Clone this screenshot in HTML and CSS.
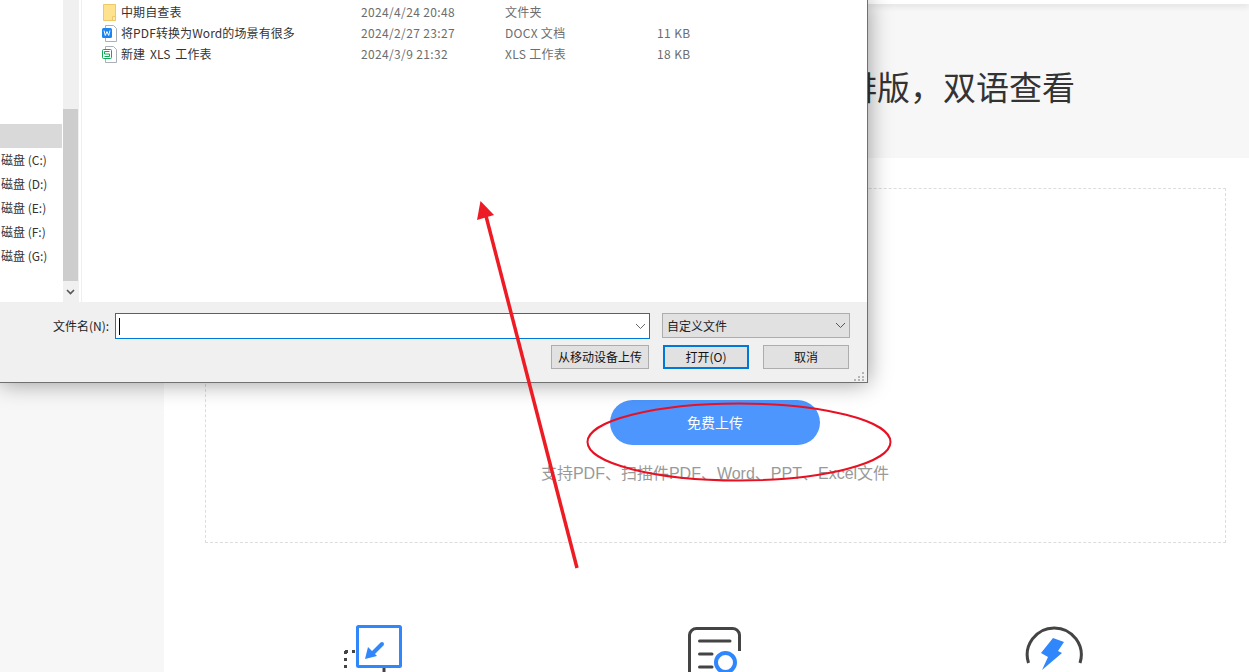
FILE: index.html
```html
<!DOCTYPE html>
<html lang="zh-CN">
<head>
<meta charset="utf-8">
<title>PDF翻译</title>
<link rel="stylesheet" href="styles.css">
</head>
<body>
<div class="page">
  <aside class="sidebar"></aside>
  <main class="main">
    <div class="topbar"></div>
    <header class="hero"><h1 class="hero-title">文档翻译，保留原文排版，双语查看</h1></header>
    <section class="upload">
      <button class="upload-btn">免费上传</button>
      <p class="upload-hint">支持PDF、扫描件PDF、Word、PPT、Excel文件</p>
    </section>
    <section class="features">
      <div class="feature">
        <svg class="feature-icon" width="60" height="60" viewBox="0 0 60 60" fill="none">
          <path d="M1.500 27V54" stroke="#444" stroke-width="3" stroke-dasharray="3 4"/>
          <path d="M1 27.500H12" stroke="#444" stroke-width="3" stroke-dasharray="3 4"/>
          <rect x="13.500" y="2.500" width="43" height="40" rx="1" stroke="#2f87fb" stroke-width="3"/>
          <path d="M38 20L27 31" stroke="#2f87fb" stroke-width="4" stroke-linecap="round"/>
          <path d="M21 35L24 23L33 32Z" fill="#2f87fb"/>
          <path d="M40 44V60" stroke="#444" stroke-width="3"/>
        </svg>
      </div>
      <div class="feature">
        <svg class="feature-icon" width="60" height="60" viewBox="-1 0 60 60" fill="none">
          <path d="M4.500 60V11A7 7 0 0 1 11.500 4.500H47A7 7 0 0 1 54.500 11V27" stroke="#444" stroke-width="3"/>
          <path d="M14.500 17H45M14.500 30H27M14.500 43H27" stroke="#444" stroke-width="3" stroke-linecap="round"/>
          <circle cx="40.500" cy="38.500" r="9.500" stroke="#2f87fb" stroke-width="4"/>
        </svg>
      </div>
      <div class="feature">
        <svg class="feature-icon" width="60" height="60" viewBox="0 0 60 60" fill="none">
          <path d="M4.500 39A27 27 0 1 1 56 39" stroke="#444" stroke-width="3"/>
          <path d="M29 14L40 18L34 27L38 29L18 46L24 33L17 29Z" fill="#2f87fb"/>
        </svg>
      </div>
    </section>
  </main>
</div>

<div class="dialog">
  <div class="dialog-body">
    <nav class="nav">
      <div class="nav-list">
        <div class="nav-item nav-selected"></div>
        <div class="nav-item">磁盘 (C:)</div>
        <div class="nav-item">磁盘 (D:)</div>
        <div class="nav-item">磁盘 (E:)</div>
        <div class="nav-item">磁盘 (F:)</div>
        <div class="nav-item">磁盘 (G:)</div>
      </div>
      <div class="scrollbar">
        <div class="scroll-thumb"></div>
        <div class="scroll-down">
          <svg width="9" height="6" viewBox="0 0 9 6" fill="none"><path d="M1 1L4.500 4.500L8 1" stroke="#555" stroke-width="1.600"/></svg>
        </div>
      </div>
    </nav>
    <div class="files">
      <div class="file-row">
        <svg class="file-icon" width="18" height="18" viewBox="0 0 18 18"><path d="M2.500 1.500H14.500V17.500H2.500Z" fill="#ffe28e" stroke="#eec868"/><path d="M11.500 13.500H14.500V17.500H11.500Z" fill="#ffe9a8" stroke="#eec868"/></svg>
        <span class="file-name">中期自查表</span><span class="file-date">2024/4/24 20:48</span><span class="file-type">文件夹</span><span class="file-size"></span>
      </div>
      <div class="file-row">
        <svg class="file-icon" width="18" height="18" viewBox="0 0 18 18"><path d="M4.500 1.500H12.500L15.500 4.500V17.500H4.500Z" fill="#fff" stroke="#a9b0b8"/><rect x="1" y="4" width="10" height="10" rx="1.500" fill="#1a84f0"/><path d="M3 6.500L4.300 11.500L6 7.500L7.700 11.500L9 6.500" fill="none" stroke="#fff" stroke-width="1"/></svg>
        <span class="file-name">将PDF转换为Word的场景有很多</span><span class="file-date">2024/2/27 23:27</span><span class="file-type">DOCX 文档</span><span class="file-size">11 KB</span>
      </div>
      <div class="file-row">
        <svg class="file-icon" width="18" height="18" viewBox="0 0 18 18"><path d="M4.500 1.500H12.500L15.500 4.500V17.500H4.500Z" fill="#fff" stroke="#a9b0b8"/><rect x="1.500" y="4.500" width="9" height="9" rx="1" fill="#fff" stroke="#12a854"/><path d="M8.500 6.500H3.500V9H8.500V11.500H3.500" fill="none" stroke="#12a854" stroke-width="1"/></svg>
        <span class="file-name">新建 XLS 工作表</span><span class="file-date">2024/3/9 21:32</span><span class="file-type">XLS 工作表</span><span class="file-size">18 KB</span>
      </div>
    </div>
  </div>
  <div class="dialog-foot">
    <div class="foot-row">
      <label class="foot-label">文件名(N):</label>
      <div class="name-input">
        <span class="caret"></span>
        <svg width="11" height="7" viewBox="0 0 11 7" fill="none"><path d="M1 1L5.500 5.500L10 1" stroke="#666"/></svg>
      </div>
      <div class="type-select">
        <span>自定义文件</span>
        <svg width="11" height="7" viewBox="0 0 11 7" fill="none"><path d="M1 1L5.500 5.500L10 1" stroke="#555"/></svg>
      </div>
    </div>
    <div class="btn-row">
      <button class="win-btn btn-mobile">从移动设备上传</button>
      <button class="win-btn btn-open">打开(O)</button>
      <button class="win-btn btn-cancel">取消</button>
    </div>
    <svg class="grip" width="11" height="9" viewBox="0 0 11 9"><path d="M8 0h2v2H8zM4 4h2v2H4zM8 4h2v2H8zM0 7h2v2H0zM4 7h2v2H4zM8 7h2v2H8z" fill="#b5b5b5"/></svg>
  </div>
</div>

<svg class="markup" width="1249" height="672" viewBox="0 0 1249 672" fill="none">
  <path d="M577 568L486 216" stroke="#ed1c24" stroke-width="3.500"/>
  <path d="M480.500 201L494 215L477 220Z" fill="#ed1c24"/>
  <ellipse cx="739" cy="442" rx="151.500" ry="38.500" stroke="#e81123" stroke-width="2"/>
</svg>
</body>
</html>
```
FILE: styles.css
```css
* { box-sizing: border-box; }
html, body { margin: 0; height: 100%; overflow: hidden; background: #fff; }
body { font-family: "Liberation Sans", "Noto Sans CJK SC", sans-serif; position: relative; }

.page { display: flex; height: 672px; overflow: hidden; }
.sidebar { width: 164px; flex: none; background: #f7f7f7; }
.main { flex: 1; display: flex; flex-direction: column; min-width: 0; background: #fff; }
.topbar { height: 4px; flex: none; background: #fff; box-shadow: 0 2px 6px rgba(0,0,0,.12); position: relative; }
.hero { height: 154px; flex: none; background: #f7f7f7; display: flex; align-items: center; justify-content: center; justify-content: flex-end; padding: 14px 174px 0 0; }
.hero-title { margin: 0; font-size: 33px; font-weight: 400; color: #333; white-space: nowrap; line-height: 1; }

.upload { flex: none; margin: 30px 23px 0 41px; height: 355px; border: 1px dashed #ddd; display: flex; flex-direction: column; align-items: center; padding: 211px 1px 0 0; }
.upload-btn { width: 210px; height: 45px; border: 0; border-radius: 22.500px; background: #4d96fd; color: #fff; font: 14px "Liberation Sans", "Noto Sans CJK SC", sans-serif; flex: none; padding: 0 0 2px; }
.upload-hint { margin: 19px 0 0; font-size: 16px; line-height: 20px; color: #999; white-space: nowrap; }

.features { flex: none; display: grid; grid-template-columns: repeat(3, 1fr); margin: 81px 25px 0 40px; }
.feature { display: flex; justify-content: center; height: 60px; }
.feature-icon { display: block; flex: none; }

.dialog { position: absolute; left: 0; top: 0; width: 868px; height: 383px; background: #fff; border-right: 1px solid #707070; border-bottom: 1px solid #707070; box-shadow: 0 0 22px rgba(0,0,0,.4); display: flex; flex-direction: column; font-family: "Noto Sans CJK SC", sans-serif; font-size: 12px; color: #222; z-index: 2; }
.dialog-body { height: 302px; display: flex; flex: none; }
.nav { width: 82px; flex: none; display: flex; border-right: 1px solid #efefef; }
.nav-list { width: 63px; flex: none; padding-top: 124px; }
.nav-item { height: 24px; line-height: 23px; padding-left: 1px; white-space: nowrap; overflow: hidden; color: #333; width: 62px; }
.nav-selected { background: #d9d9d9; }
.scrollbar { width: 16px; flex: none; background: #f0f0f0; display: flex; flex-direction: column; justify-content: flex-end; }
.scroll-thumb { height: 172px; width: 15px; background: #cdcdcd; }
.scroll-down { height: 21px; display: flex; align-items: center; justify-content: center; padding-right: 1px; }

.files { flex: 1; padding-top: 1px; }
.file-row { height: 21px; display: flex; align-items: center; position: relative; }
.file-icon { margin-left: 19px; flex: none; }
.file-name { margin-left: 2px; width: 240px; flex: none; white-space: nowrap; color: #333; letter-spacing: .1px; word-spacing: 2px; }
.file-date { width: 144px; flex: none; color: #6d6d6d; letter-spacing: .35px; }
.file-type { width: 152px; flex: none; color: #6d6d6d; letter-spacing: .3px; }
.file-size { color: #6d6d6d; letter-spacing: .4px; }

.dialog-foot { flex: 1; background: #f0f0f0; position: relative; }
.foot-row { display: flex; align-items: flex-start; padding-top: 11px; }
.foot-label { margin-left: 53px; width: 62px; line-height: 26px; color: #222; flex: none; }
.name-input { width: 535px; height: 26px; background: #fff; border: 1px solid #0078d7; display: flex; align-items: center; justify-content: space-between; padding: 0 3px 0 3px; flex: none; }
.caret { width: 1px; height: 17px; background: #000; }
.type-select { margin-left: 12px; width: 188px; height: 25px; background: #e1e1e1; border: 1px solid #adadad; display: flex; align-items: center; justify-content: space-between; padding: 0 3px 0 4px; flex: none; }
.btn-row { display: flex; margin-top: 6px; padding-left: 551px; }
.win-btn { height: 24px; background: #e1e1e1; border: 1px solid #adadad; font: 12px "Noto Sans CJK SC", sans-serif; color: #111; padding: 0 0 2px; flex: none; }
.btn-mobile { width: 98px; }
.btn-open { width: 86px; margin-left: 14px; border: 2px solid #0078d7; }
.btn-cancel { width: 86px; margin-left: 14px; }
.grip { position: absolute; right: 2px; bottom: 1px; }

.markup { position: absolute; left: 0; top: 0; z-index: 3; pointer-events: none; }
```
